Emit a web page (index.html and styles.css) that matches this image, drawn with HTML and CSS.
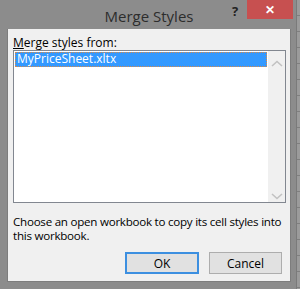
FILE: index.html
```html
<!DOCTYPE html>
<html lang="en">
<head>
    <meta charset="UTF-8">
    <title>Merge Styles</title>
    <link rel="stylesheet" href="styles.css">
</head>
<body>

    <div class="screen">
        <div class="dialog">
            <div class="titlebar">
                <span class="title">Merge Styles</span>
                <span class="help">?</span>
                <button class="close">&#10005;</button>
            </div>

            <div class="panel">
                <label class="field-label"><u>M</u>erge styles from:</label>

                <div class="listbox">
                    <ul class="items">
                        <li class="item selected">MyPriceSheet.xltx</li>
                    </ul>
                    <div class="scrollbar">
                        <svg width="16" height="10" viewBox="0 0 16 10"><path d="M3 7 L8 2.5 L13 7" fill="none" stroke="#c2c2c2" stroke-width="1.6"/></svg>
                        <svg width="16" height="10" viewBox="0 0 16 10"><path d="M3 3 L8 7.5 L13 3" fill="none" stroke="#c2c2c2" stroke-width="1.6"/></svg>
                    </div>
                </div>

                <p class="hint">Choose an open workbook to copy its cell styles into this workbook.</p>

                <div class="buttons">
                    <button class="btn default">OK</button>
                    <button class="btn">Cancel</button>
                </div>
            </div>
        </div>

        <!-- sheet grid showing behind the dialog -->
        <div class="sheet-edge"></div>
    </div>

</body>
</html>
```

FILE: styles.css
```css
* {
    box-sizing: border-box;
    margin: 0;
    padding: 0;
}

body {
    width: 300px;
    height: 289px;
    overflow: hidden;
    background: #8a8a8a;
    font-family: "Open Sans", "Noto Sans", sans-serif;
}

.screen {
    display: flex;
    height: 289px;
}

.dialog {
    width: 296px;
    display: flex;
    flex-direction: column;
    background: #8c8c8c;
}

.titlebar {
    position: relative;
    height: 29px;
    display: flex;
    align-items: center;
    justify-content: center;
}

.title {
    font-family: "Open Sans", sans-serif;
    font-size: 15px;
    color: #2d2d2d;
    margin-top: 2px;
    margin-left: 2px;
}

.help {
    position: absolute;
    left: 232px;
    top: 2px;
    font-size: 13px;
    font-weight: bold;
    color: #222;
}

.close {
    position: absolute;
    left: 247px;
    top: 0;
    width: 46px;
    height: 19px;
    border: none;
    background: #c75050;
    color: #fff;
    font-size: 12px;
    font-weight: bold;
}

.panel {
    margin: 0 5px 7px 7px;
    flex: 1;
    background: #f0f0f0;
    border: 1px solid #7d7d7d;
    border-top: none;
    padding: 6px 6px 0 5px;
    display: flex;
    flex-direction: column;
}

.field-label {
    font-size: 12px;
    color: #000;
    line-height: 15px;
}

.listbox {
    margin-top: 0;
    height: 153px;
    width: 273px;
    border: 1px solid #828790;
    background: #fff;
    display: flex;
}

.items {
    list-style: none;
    flex: 1;
    padding: 1px;
}

.item {
    font-size: 12px;
    line-height: 14px;
    height: 15px;
    padding-left: 2px;
    color: #fff;
}

.item.selected {
    background: #3399ff;
    outline: 1px dotted #d98a4a;
    outline-offset: -1px;
}

.scrollbar {
    width: 17px;
    background: #f0f0f0;
    display: flex;
    flex-direction: column;
    justify-content: space-between;
    align-items: center;
    padding: 8px 0 1px;
}

.hint {
    margin-top: 12px;
    width: 274px;
    font-size: 11.6px;
    line-height: 14px;
    color: #000;
    letter-spacing: -0.25px;
}

.buttons {
    margin-top: 9px;
    display: flex;
    justify-content: flex-end;
    gap: 10px;
    padding-right: 2px;
}

.btn {
    width: 73px;
    height: 22px;
    background: #e1e1e1;
    border: 1px solid #adadad;
    font-family: "Open Sans", sans-serif;
    font-size: 12px;
    color: #000;
}

.btn.default {
    width: 74px;
    border-color: #3c8fe0;
    border-width: 2px;
}

.sheet-edge {
    flex: 1;
    background-color: #9b9b9b;
    background-image: repeating-linear-gradient(to bottom, transparent 0, transparent 15px, #7f7f7f 15px, #7f7f7f 16px);
    border-left: 1px solid #7a7a7a;
}
```
